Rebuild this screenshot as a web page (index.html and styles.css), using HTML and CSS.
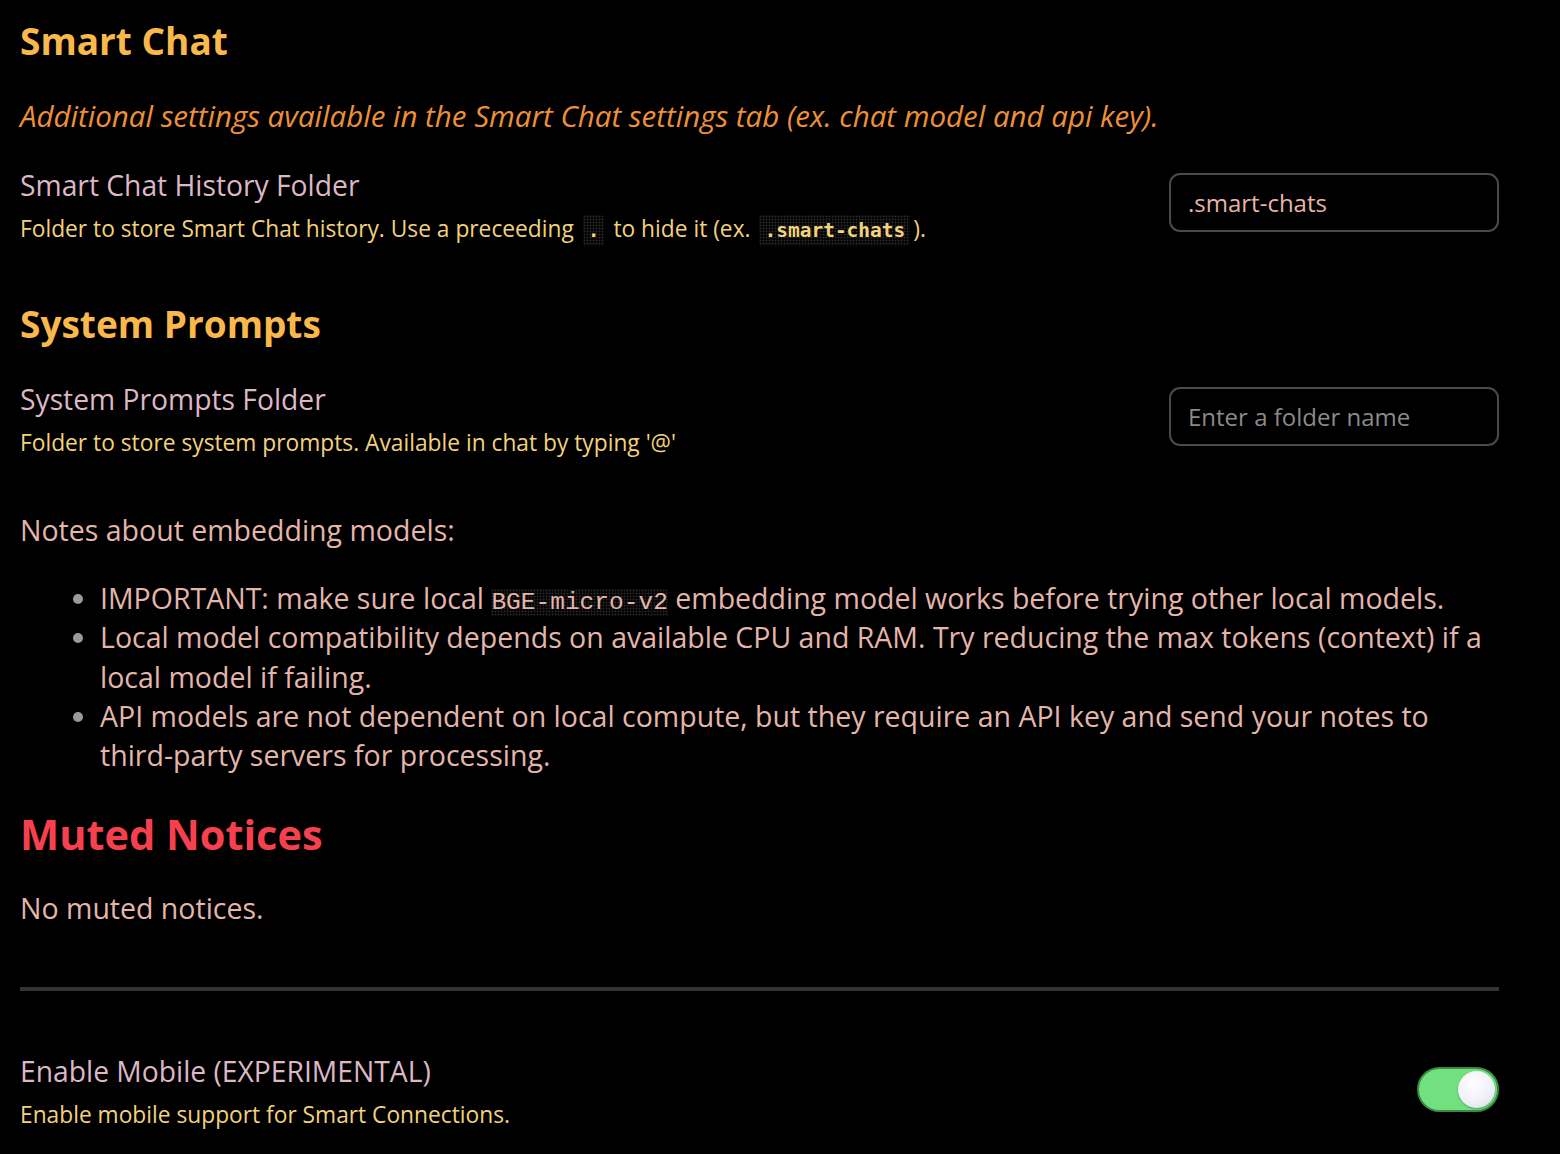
FILE: index.html
```html
<!DOCTYPE html>
<html lang="en">
<head>
<meta charset="utf-8">
<title>Smart Connections Settings</title>
<link rel="stylesheet" href="styles.css">
</head>
<body>
<main class="settings">
  <h2 class="heading">Smart Chat</h2>
  <p class="note-italic">Additional settings available in the Smart Chat settings tab (ex. chat model and api key).</p>

  <div class="setting-row first-row">
    <div class="setting-info">
      <div class="setting-name">Smart Chat History Folder</div>
      <div class="setting-desc">Folder to store Smart Chat history. Use a preceeding <code class="code-desc">.</code> to hide it (ex. <code class="code-desc">.smart-chats</code>).</div>
    </div>
    <input class="text-input" type="text" value=".smart-chats">
  </div>

  <h2 class="heading heading-second">System Prompts</h2>

  <div class="setting-row second-row">
    <div class="setting-info">
      <div class="setting-name">System Prompts Folder</div>
      <div class="setting-desc">Folder to store system prompts. Available in chat by typing '@'</div>
    </div>
    <input class="text-input" type="text" placeholder="Enter a folder name">
  </div>

  <p class="body-text notes-title">Notes about embedding models:</p>
  <ul class="notes-list">
    <li>IMPORTANT: make sure local <code class="code-body">BGE-micro-v2</code> embedding model works before trying other local models.</li>
    <li>Local model compatibility depends on available CPU and RAM. Try reducing the max tokens (context) if a local model if failing.</li>
    <li>API models are not dependent on local compute, but they require an API key and send your notes to third-party servers for processing.</li>
  </ul>

  <h2 class="heading-muted">Muted Notices</h2>
  <p class="body-text muted-empty">No muted notices.</p>

  <hr class="divider">

  <div class="setting-row mobile-row">
    <div class="setting-info">
      <div class="setting-name">Enable Mobile (EXPERIMENTAL)</div>
      <div class="setting-desc">Enable mobile support for Smart Connections.</div>
    </div>
    <div class="toggle is-on"><div class="toggle-knob"></div></div>
  </div>
</main>
</body>
</html>
```

FILE: styles.css
```css
* {
  box-sizing: border-box;
}

html, body {
  background: #000;
}

body {
  margin: 0;
  padding: 18px 61px 0 20px;
  font-family: "Open Sans", "Noto Sans", sans-serif;
  color: #e4b5ab;
}

.settings {
  display: flex;
  flex-direction: column;
}

.heading {
  margin: 0;
  font-size: 37px;
  line-height: 46px;
  font-weight: 700;
  color: #f9b84b;
}

.heading-second {
  margin-top: 54px;
}

.note-italic {
  margin: 32px 0 0;
  font-size: 29.5px;
  line-height: 40px;
  font-style: italic;
  color: #ee9038;
}

.setting-row {
  display: flex;
  align-items: center;
  justify-content: space-between;
  gap: 24px;
}

.first-row {
  margin-top: 29px;
}

.second-row {
  margin-top: 32px;
}

.mobile-row {
  margin-top: 60px;
}

.setting-info {
  display: flex;
  flex-direction: column;
}

.setting-name {
  font-size: 28.25px;
  line-height: 40px;
  color: #dcb7c6;
}

.setting-desc {
  margin-top: 6px;
  font-size: 22.75px;
  line-height: 36px;
  color: #f3d27c;
}

.code-desc {
  font-family: "DejaVu Sans Mono", "Liberation Mono", monospace;
  font-size: 19.5px;
  line-height: 1;
  font-weight: 700;
  color: #f3d27c;
  padding: 4px 5px;
  margin: 0 3px;
  background-color: #050505;
  background-image: radial-gradient(circle, #2c2c2c 0.8px, transparent 1.1px);
  background-size: 3px 3px;
}

.code-body {
  font-family: "Liberation Mono", monospace;
  font-size: 24.5px;
  line-height: 1;
  color: #e4b5ab;
  background-color: #050505;
  background-image: radial-gradient(circle, #2a2a2a 0.8px, transparent 1.1px);
  background-size: 3px 3px;
}

.text-input {
  width: 330px;
  height: 59px;
  flex: none;
  margin-bottom: 7px;
  padding: 0 17px;
  border: 2px solid #4a4a4a;
  border-radius: 11px;
  background: #000;
  font-family: "Open Sans", "Noto Sans", sans-serif;
  font-size: 24px;
  color: #e6b4a8;
  outline: none;
}

.text-input::placeholder {
  color: #8a8a8a;
}

.body-text {
  margin: 0;
  font-size: 28.5px;
  line-height: 40px;
  color: #e4b5ab;
}

.notes-title {
  margin-top: 49px;
}

.notes-list {
  margin: 29px 0 0;
  padding-left: 80px;
  font-size: 28.5px;
  line-height: 39.25px;
  color: #e4b5ab;
}

.notes-list li::marker {
  color: #9a9a9a;
}

.heading-muted {
  margin: 33px 0 0;
  font-size: 41.5px;
  line-height: 52px;
  font-weight: 700;
  color: #f6404e;
}

.muted-empty {
  margin-top: 28px;
}

.divider {
  margin: 59px 0 0;
  width: 1479px;
  height: 4px;
  border: none;
  background: #333;
}

.toggle {
  width: 82px;
  height: 45px;
  flex: none;
  border-radius: 23px;
  border: 2px solid #3b8a46;
  background: #72e07e;
  display: flex;
  align-items: center;
  justify-content: flex-end;
  padding: 0 2px;
  margin-top: -6px;
}

.toggle-knob {
  width: 37px;
  height: 37px;
  border-radius: 50%;
  background: radial-gradient(circle at 40% 35%, #ffffff 0%, #f0f0f8 55%, #d6d6e4 100%);
  box-shadow: 0 1px 2px rgba(0, 0, 0, 0.3);
}
```
